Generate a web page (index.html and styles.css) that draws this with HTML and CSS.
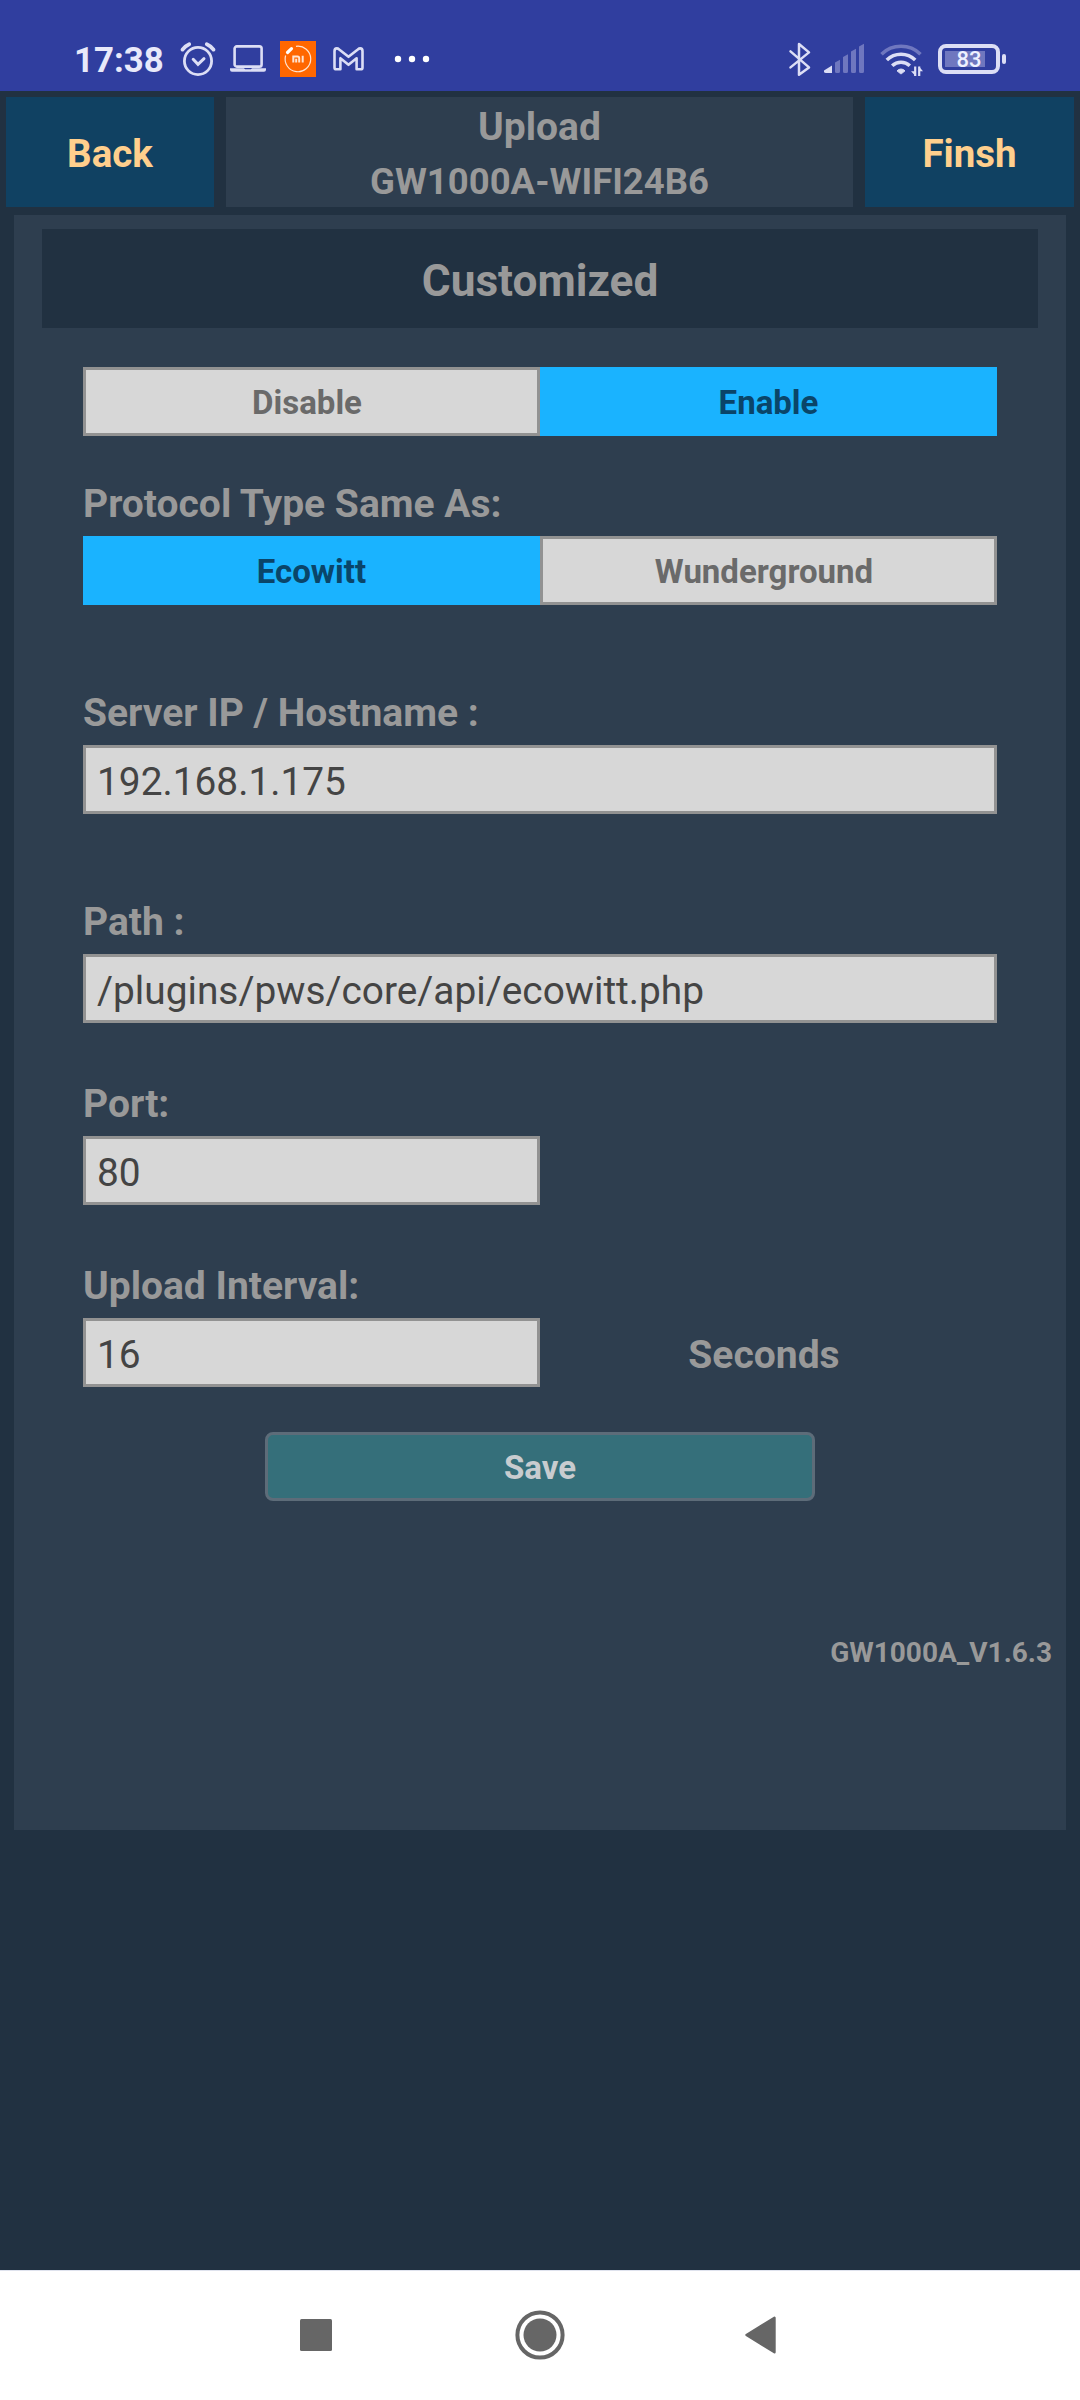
FILE: index.html
```html
<!DOCTYPE html>
<html lang="en">
<head>
<meta charset="utf-8">
<title>Upload</title>
<link rel="stylesheet" href="styles.css">
</head>
<body>
<div class="status">
  <div class="status-left">
    <span class="clock">17:38</span>
    <svg class="ic-alarm" width="36" height="36" viewBox="0 0 36 36" fill="none" stroke="#dcdef5" stroke-linecap="round">
      <circle cx="18" cy="20" r="13.6" stroke-width="2.8"/>
      <path d="M13.2 18.3l4.8 5 6-5.6" stroke-width="3"/>
      <path d="M2.5 8.6Q5.3 4.8 9.2 3.2M33.5 8.6Q30.7 4.8 26.8 3.2" stroke-width="3.8"/>
    </svg>
    <svg class="ic-laptop" width="36" height="28" viewBox="0 0 36 28">
      <rect x="4.6" y="1.4" width="27" height="20.2" rx="2.2" fill="none" stroke="#dcdef5" stroke-width="2.6"/>
      <path d="M0 23.2h14l1 1.1h6l1-1.1h14v1.6q0 2-2 2H2q-2 0-2-2z" fill="#dcdef5"/>
    </svg>
    <svg class="ic-mi" width="36" height="36" viewBox="0 0 36 36" fill="none" stroke="#fff">
      <rect width="36" height="36" fill="#ff6700" stroke="none"/>
      <path d="M16 5.3A12.8 12.8 0 1 1 5.6 14.5" stroke="#ffe3d0" stroke-width="1.2"/>
      <path d="M7.5 11.5l4-3.8" stroke-width="3.2" stroke-linecap="round"/>
      <path d="M13.3 21.5v-6h4.2q1.7 0 1.7 1.7v4.3M16.2 17.8v3.7M22.7 14.7v6.8" stroke="#ffe3d0" stroke-width="2"/>
    </svg>
    <svg class="ic-mail" width="31" height="24" viewBox="0 0 31 24" fill="none" stroke="#dcdef5" stroke-width="2.6" stroke-linejoin="round">
      <path d="M1.5 4.2Q1.5 1.4 3.8 1.4 5 1.4 6.2 2.4L15.5 9.8 24.8 2.4Q26 1.4 27.2 1.4 29.5 1.4 29.5 4.2V20.4Q29.5 22.3 27.6 22.3H23.6V11.2L15.5 17.8 7.4 11.2V22.3H3.4Q1.5 22.3 1.5 20.4Z"/>
    </svg>
    <svg class="ic-dots" width="36" height="8" viewBox="0 0 36 8" fill="#fff">
      <circle cx="4" cy="4" r="3.2"/><circle cx="18" cy="4" r="3.2"/><circle cx="32" cy="4" r="3.2"/>
    </svg>
  </div>
  <div class="status-right">
    <svg class="ic-bt" width="22" height="35" viewBox="0 0 22 35" fill="none" stroke="#dcdef5" stroke-width="2.5" stroke-linejoin="round" stroke-linecap="round">
      <path d="M1.5 9.4L20 25.4 10 32.8V2L20 10.4 1.5 25.4"/>
    </svg>
    <svg class="ic-signal" width="41" height="29" viewBox="0 0 41 29" fill="#6f77bf">
      <path d="M0 26.5L8 21.5V29H2Q0 29 0 27.5Z" fill="#dcdef5"/>
      <path d="M11 18.5l5-2.8V27.5q0 1.5-1.5 1.5h-2Q11 29 11 27.5ZM19 13l5-2.8V27.5q0 1.5-1.5 1.5h-2Q19 29 19 27.5ZM27 7.5l5-2.8V27.5q0 1.5-1.5 1.5h-2Q27 29 27 27.5ZM35 2.5l5-2.8V27.5q0 1.5-1.5 1.5h-2Q35 29 35 27.5Z"/>
    </svg>
    <svg class="ic-wifi" width="43" height="34" viewBox="0 0 43 34" fill="none" stroke="#dcdef5" stroke-width="3.6">
      <path d="M1.5 11.2A28 28 0 0 1 40.5 11.2" stroke="#6f77bf"/>
      <path d="M6.8 17A20.5 20.5 0 0 1 35.2 17"/>
      <path d="M12.2 22.7A13 13 0 0 1 29.8 22.7"/>
      <path d="M17 27.8Q21 24.2 25 27.8L21.6 30.6Q21 31 20.4 30.6Z" fill="#dcdef5" stroke-width="1"/>
      <path d="M35.2 23.5V33M39.2 33V23.5" stroke-width="2.2"/>
      <path d="M35.5 33L31 28.2h4.5zM39 23.5l4 4.8h-4z" fill="#dcdef5" stroke="none"/>
    </svg>
    <div class="battery"><div class="battery-body"><span class="battery-text">83</span></div><div class="battery-nub"></div></div>
  </div>
</div>

<div class="header">
  <div class="hbtn">Back</div>
  <div class="htitle"><div class="t1">Upload</div><div class="t2">GW1000A-WIFI24B6</div></div>
  <div class="hbtn finish">Finsh</div>
</div>

<div class="panel">
  <div class="title">Customized</div>
  <div class="form">
    <div class="seg"><div class="opt off">Disable</div><div class="opt on">Enable</div></div>
    <div class="label l-proto">Protocol Type Same As:</div>
    <div class="seg"><div class="opt on">Ecowitt</div><div class="opt off">Wunderground</div></div>
    <div class="label l-wide">Server IP / Hostname :</div>
    <div class="field">192.168.1.175</div>
    <div class="label l-wide">Path :</div>
    <div class="field">/plugins/pws/core/api/ecowitt.php</div>
    <div class="label l-near">Port:</div>
    <div class="field half">80</div>
    <div class="label l-near">Upload Interval:</div>
    <div class="row"><div class="field half">16</div><div class="unit">Seconds</div></div>
    <div class="save">Save</div>
  </div>
  <div class="version">GW1000A_V1.6.3</div>
</div>

<div class="nav">
  <svg width="32" height="32" viewBox="0 0 32 32"><rect width="32" height="32" rx="1.5" fill="#666"/></svg>
  <svg class="nav-home" width="50" height="50" viewBox="0 0 50 50"><circle cx="25" cy="25" r="22.6" fill="none" stroke="#666" stroke-width="4"/><circle cx="25" cy="25" r="16.5" fill="#666"/></svg>
  <svg class="nav-back" width="31" height="38" viewBox="0 0 31 38"><path d="M1.5 19L29.5 1.8V36.2Z" fill="#666" stroke="#666" stroke-width="2.4" stroke-linejoin="round"/></svg>
</div>
</body>
</html>
```
FILE: styles.css
```css
* { box-sizing: border-box; }
body {
  margin: 0;
  width: 1080px;
  height: 2400px;
  background: #213141;
  font-family: Roboto, "Liberation Sans", sans-serif;
  display: flex;
  flex-direction: column;
  overflow: hidden;
}
svg { display: block; flex: none; overflow: visible; }

/* status bar */
.status {
  height: 91px;
  background: #303e9f;
  display: flex;
  justify-content: space-between;
  padding: 0 74px 0 74px;
}
.status-left, .status-right { display: flex; align-items: flex-start; }
.clock {
  width: 106px;
  margin-top: 40px;
  font-size: 34.8px;
  line-height: 40px;
  font-weight: 700;
  color: #e8e9fa;
}
.ic-alarm { margin-top: 41px; }
.ic-laptop { margin: 45px 0 0 14px; }
.ic-mi { margin: 41px 0 0 14px; }
.ic-mail { margin: 47px 0 0 17px; }
.ic-dots { margin: 55px 0 0 30px; }
.ic-bt { margin-top: 42px; }
.ic-signal { margin: 44px 0 0 13px; }
.ic-wifi { margin: 43px 0 0 15px; }
.battery { display: flex; align-items: center; gap: 2px; margin: 44px 0 0 15px; }
.battery-body {
  width: 62px;
  height: 30px;
  border: 4px solid #dcdef5;
  border-radius: 8px;
  background: linear-gradient(#6f77bf, #6f77bf) 3px 3px / 40px 16px no-repeat;
  display: flex;
  justify-content: center;
}
.battery-text { font-size: 22px; line-height: 24px; font-weight: 500; color: #eef0ff; }
.battery-nub { width: 4px; height: 10px; border-radius: 2px; background: #dcdef5; }

/* header */
.header { display: flex; gap: 12px; height: 110px; margin: 6px 6px 8px; }
.hbtn {
  width: 208px;
  background: #104162;
  color: #ffcf8d;
  font-size: 38.5px;
  font-weight: 700;
  line-height: 113px;
  text-align: center;
}
.finish { width: 209px; }
.htitle { flex: 1; background: #2e3e4f; color: #999; font-weight: 700; text-align: center; }
.t1 { font-size: 39px; line-height: 61px; }
.t2 { font-size: 36.5px; line-height: 48px; }

/* settings panel */
.panel { margin: 0 14px; height: 1615px; background: #2e3e4f; padding: 14px 0 0; }
.title {
  margin: 0 28px;
  height: 99px;
  background: #213141;
  color: #999;
  font-size: 44.2px;
  font-weight: 700;
  line-height: 104px;
  text-align: center;
}
.form { margin: 39px 69px 0; display: flex; flex-direction: column; }
.seg { display: flex; height: 69px; }
.opt {
  width: 457px;
  font-size: 33px;
  font-weight: 700;
  line-height: 71px;
  text-align: center;
}
.on { background: #1ab3ff; color: #0a4569; }
.off {
  background: #d7d7d7;
  border: 3px solid #929292;
  padding-right: 9px;
  color: #6a6a6a;
  line-height: 65px;
}
.label {
  height: 45px;
  line-height: 47px;
  font-size: 39px;
  font-weight: 700;
  color: #999;
}
.l-proto { margin: 45px 0 10px; }
.l-wide { margin: 85px 0 10px; }
.l-near { margin: 58px 0 10px; }
.field {
  height: 69px;
  background: #d7d7d7;
  border: 3px solid #929292;
  padding-left: 11px;
  font-size: 38.85px;
  line-height: 68px;
  color: #444;
}
.half { width: 457px; }
.row { display: flex; height: 69px; }
.unit {
  flex: 1;
  padding-right: 9px;
  text-align: center;
  font-size: 39px;
  line-height: 74px;
  font-weight: 700;
  color: #999;
}
.save {
  width: 550px;
  height: 69px;
  margin: 45px auto 0;
  background: #356f7a;
  border: 3px solid #5d6c79;
  border-radius: 8px;
  color: #c8cccf;
  font-size: 33px;
  font-weight: 700;
  line-height: 65px;
  text-align: center;
}
.version {
  margin: 135px 14px 0 0;
  text-align: right;
  font-size: 28px;
  line-height: 34px;
  font-weight: 700;
  color: #999;
}

/* navigation bar */
.nav {
  margin-top: auto;
  height: 130px;
  background: #fff;
  border-top: 1px solid #dfe3ee;
  display: flex;
  align-items: center;
  padding: 0 0 1px 300px;
}
.nav-home { margin-left: 183px; }
.nav-back { margin-left: 180px; }
```
